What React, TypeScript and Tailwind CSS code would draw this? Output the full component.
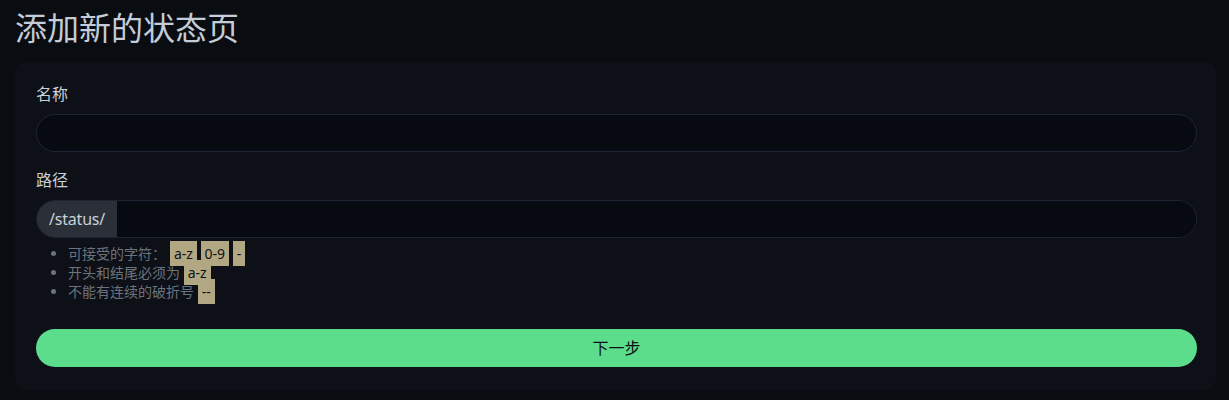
import React from "react";

const Code = ({ children }: { children: React.ReactNode }) => (
  <code className="bg-[#b1a883] text-[#0d1117] px-[4px] py-[3px] text-[14px] leading-[16px] font-['Noto_Sans','Noto_Sans_CJK_SC',sans-serif]">
    {children}
  </code>
);

const App = () => (
  <div className="min-h-[400px] w-full bg-[#090c10] pl-[15px] pr-[13px] pt-[4px] font-['Noto_Sans','Noto_Sans_CJK_SC',sans-serif]">
    <h1 className="text-[32px] leading-[48px] text-[#c4ccd8] mb-[10px]">添加新的状态页</h1>
    <div className="bg-[#0d1017] rounded-[10px] pl-[21px] pr-[19px] pt-[20px] pb-[23px]">
      <label className="block text-[16px] leading-[24px] text-[#c9d1d9] mb-[8px]">名称</label>
      <input
        type="text"
        className="block w-full h-[38px] rounded-full bg-[#070a10] border border-[#1c2533] px-4 text-[#c9d1d9] outline-none mb-[16px]"
      />
      <label className="block text-[16px] leading-[24px] text-[#c9d1d9] mb-[8px]">路径</label>
      <div className="flex h-[38px] rounded-full border border-[#1c2533] overflow-hidden">
        <span className="flex items-center w-[80px] shrink-0 bg-[#2a2f38] text-[#c9d1d9] text-[16px] pl-[12px] tracking-[-0.2px]">/status/</span>
        <input type="text" className="flex-1 bg-[#070a10] outline-none px-3 text-[#c9d1d9]" />
      </div>
      <ul className="list-disc pl-[32px] mt-[6px] text-[14px] leading-[19px] text-[#6c737c] marker:text-[#6c737c]">
        <li>
          可接受的字符：<span className="inline-block w-[4px]" />
          <Code>a-z</Code> <Code>0-9</Code> <Code>-</Code>
        </li>
        <li>
          开头和结尾必须为 <Code>a-z</Code>
        </li>
        <li>
          不能有连续的破折号 <Code>--</Code>
        </li>
      </ul>
      <button className="mt-[28px] w-full h-[38px] rounded-full bg-[#5cdd8b] text-[#0d1117] text-[16px]">
        下一步
      </button>
    </div>
  </div>
);

export default App;
